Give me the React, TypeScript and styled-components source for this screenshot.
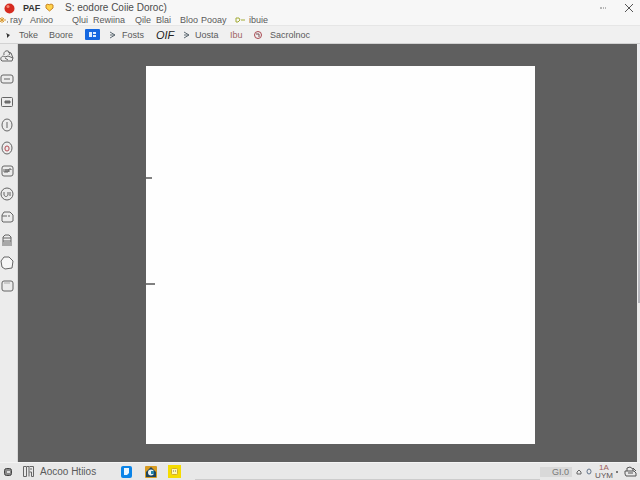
import React from "react";
import styled, { createGlobalStyle } from "styled-components";

const Global = createGlobalStyle`
  * { box-sizing: border-box; }
  body { margin: 0; font-family: "Liberation Sans", Arial, sans-serif; color: #4c4c4c; background: #e8e8e8; }
  button { font: inherit; color: inherit; background: none; border: 0; padding: 0; margin: 0; }
  svg { display: block; flex: none; }
`;

const Window = styled.div`
  min-height: 100vh;
  display: grid;
  grid-template-rows: 15px 11px 18px 1fr 18px;
`;
const TitleBar = styled.header`
  display: flex;
  align-items: center;
  gap: 4px;
  padding: 0 6px 0 4px;
  background: #f7f7f7;
`;
const AppName = styled.span`
  width: 18px;
  margin-left: 4px;
  font: bold 9px "Liberation Sans", sans-serif;
  color: #333;
`;
const Title = styled.h1`
  flex: 1;
  margin: 0 0 0 7px;
  font-size: 10px;
  line-height: 12px;
  font-weight: 400;
  white-space: nowrap;
`;
const WindowButton = styled.button`
  display: grid;
  place-items: center;
  width: 10px;
  height: 12px;
  margin-left: 12px;
`;
const MenuBar = styled.nav`
  display: flex;
  align-items: center;
  background: #f7f7f7;
  border-bottom: 1px solid #e6e6e6;
`;
const ToolBar = styled.div`
  display: flex;
  align-items: center;
  background: #f0f0f0;
  border-bottom: 1px solid #d2d2d2;
`;
const BarItem = styled.button<{ $w: number; $color?: string; $size?: number; $slant?: boolean }>`
  display: flex;
  align-items: center;
  flex: none;
  width: ${(p) => p.$w}px;
  height: 100%;
  font-size: ${(p) => p.$size ?? 9}px;
  line-height: 10px;
  font-style: ${(p) => (p.$slant ? "italic" : "normal")};
  color: ${(p) => p.$color ?? "#5a5a5a"};
  white-space: nowrap;
`;
const Body = styled.div`
  display: grid;
  grid-template-columns: 18px 1fr 3px;
`;
const SideBar = styled.aside`
  display: flex;
  flex-direction: column;
  background: #ececec;
  border-right: 1px solid #d8d8d8;
`;
const Tool = styled.button`
  display: grid;
  place-items: center;
  width: 14px;
  height: 23px;
`;
const Workspace = styled.main`
  display: flex;
  padding: 22px 16.5% 18px 20.7%;
  background: #5f5f5f;
`;
const Page = styled.section`
  flex: 1;
  display: flex;
  flex-direction: column;
  background: #fefefe;
  padding-top: 111px;
  gap: 104px;
`;
const Tick = styled.span<{ $w: number }>`
  width: ${(p) => p.$w}px;
  height: 2px;
  background: #808080;
`;
const ScrollTrack = styled.div`
  display: flex;
  flex-direction: column;
  background: #ebebeb;
`;
const ScrollThumb = styled.div`
  height: 62%;
  background: linear-gradient(#ececef 20%, #b4b4ba);
  border-left: 1px solid #eeeeee;
`;
const StatusBar = styled.footer`
  display: flex;
  align-items: center;
  background: #e8e8e8;
  border-top: 1px solid #f4f4f4;
`;
const StatusTrack = styled.div`
  flex: 1;
  align-self: flex-end;
  height: 1px;
  background: #cccccc;
`;
const Reading = styled.span`
  width: 32px;
  margin-right: 4px;
  padding-right: 3px;
  text-align: right;
  background: #d9d9d9;
  font-size: 9px;
  line-height: 10px;
  color: #777;
`;
const Clock = styled.span`
  width: 20px;
  font-size: 8px;
  line-height: 8px;
  text-align: center;
  color: #5c5252;
`;
const ClockTop = styled.span`
  color: #a0605c;
`;

const toolDrawings: [string, React.ReactNode][] = [
  ["Shapes", <><path d="M4 6C3 2 8 0 10 4L9 6M1 11C0 8 3 6 5 8L8 7 13 9 12 12H2Z" /><path d="M8 3l3 1 2 5M5 9l3 2" /></>],
  ["Line", <><rect x="1" y="3" width="12" height="8" rx="2" /><path d="M4 7h6" /></>],
  ["Frame", <><rect x="1.5" y="2.5" width="11" height="9" rx="1" /><path d="M5 6h5v2H5z" fill="#777" /></>],
  ["Info", <><ellipse cx="7" cy="7" rx="5" ry="6" /><path d="M7 4v6" /></>],
  ["Record", <><ellipse cx="7" cy="7" rx="5" ry="6" /><rect x="5" y="5" width="4" height="5" rx="2" stroke="#b44a52" /></>],
  ["Text", <><rect x="2" y="2" width="11" height="10" rx="2" /><path d="M4 5v3h2V5v3h2V5v3M9 8V5h2v1" /></>],
  ["Smile", <><circle cx="7" cy="7" r="6" /><path d="M4 5v3c1 2 3 2 4 0V5M10 5v4" /></>],
  ["Note", <><path d="M2 5l2-3h6l3 3v6l-2 1H3l-1-1z" /><path d="M2 6h5M8 6h2" /></>],
  ["Archive", <><path d="M3 11V4l2-2h4l2 2v7M2 12h10M3 5h8M3 8h8M4 10h6" /></>],
  ["Shape", <path d="M4 1L1 5l1 6 3 2 7-1 1-7-4-4z" fill="#f6f6f6" />],
  ["Panel", <><rect x="2" y="2" width="11" height="10" rx="2" /><path d="M4 4h6" stroke="#aaa" /></>],
];

const Arrow = () => (
  <svg width="8" height="8" viewBox="0 0 8 8" fill="none" stroke="#5e6a73"><path d="M1 1l5 3-5 3M1 4h5" /></svg>
);

export default function App() {
  return (
    <Window>
      <Global />
      <TitleBar>
        <svg width="11" height="12" viewBox="0 0 11 12"><circle cx="5.5" cy="6.5" r="5" fill="#d62b20" /><circle cx="4" cy="4.5" r="1.5" fill="#f28a78" /></svg>
        <AppName>PAF</AppName>
        <svg width="9" height="9" viewBox="0 0 9 9"><path d="M1 2l2-1 1 1 2-1 2 1v3L4.500 8 1 5z" fill="#ffd34c" stroke="#c98524" /></svg>
        <Title>S: eodore Coiie Doroc)</Title>
        <WindowButton aria-label="More"><svg width="8" height="4" viewBox="0 0 8 4"><path d="M1 2h2M4 2h1M6 2h1" stroke="#777" /></svg></WindowButton>
        <WindowButton aria-label="Close"><svg width="8" height="8" viewBox="0 0 8 8"><path d="M0 0l8 8M8 0L0 8" stroke="#555" /></svg></WindowButton>
      </TitleBar>
      <MenuBar>
        <BarItem $w={10} aria-label="Favourite"><svg width="9" height="9" viewBox="0 0 9 9"><path d="M0 4h6M2 1v6M0 2l4 4M4 2L0 6" stroke="#d99a32" /><path d="M7 6h1" stroke="#555" /></svg></BarItem>
        <BarItem $w={20}>ray</BarItem>
        <BarItem $w={42}>Anioo</BarItem>
        <BarItem $w={21}>Qlui</BarItem>
        <BarItem $w={42}>Rewiina</BarItem>
        <BarItem $w={21}>Qile</BarItem>
        <BarItem $w={24}>Blai</BarItem>
        <BarItem $w={21}>Bloo</BarItem>
        <BarItem $w={34}>Pooay</BarItem>
        <BarItem $w={14} aria-label="Key"><svg width="11" height="8" viewBox="0 0 11 8" fill="none" stroke="#a2ab35"><path d="M1 6V2h3l1 2-2 2zM6 4h4" /></svg></BarItem>
        <BarItem $w={20}>ibuie</BarItem>
      </MenuBar>
      <ToolBar>
        <BarItem $w={19} aria-label="Pointer"><svg width="12" height="8" viewBox="0 0 12 8"><path d="M6 2l4 2-3 3V4z" fill="#333" /></svg></BarItem>
        <BarItem $w={30}>Toke</BarItem>
        <BarItem $w={36}>Boore</BarItem>
        <BarItem $w={24} aria-label="Layout"><svg width="15" height="11" viewBox="0 0 15 11"><rect width="15" height="11" rx="1" fill="#1467e0" /><path d="M4 3h3v5H4zM8 3h3v2H8zM8 6h3v2H8z" fill="#dcecff" /></svg></BarItem>
        <BarItem $w={13} aria-label="Next"><Arrow /></BarItem>
        <BarItem $w={34}>Fosts</BarItem>
        <BarItem $w={27} $size={11} $slant $color="#222">OIF</BarItem>
        <BarItem $w={12} aria-label="Forward"><Arrow /></BarItem>
        <BarItem $w={35}>Uosta</BarItem>
        <BarItem $w={23} $color="#a06464">Ibu</BarItem>
        <BarItem $w={17} aria-label="Alert"><svg width="10" height="10" viewBox="0 0 10 10" fill="none" stroke="#a94850"><circle cx="5" cy="5" r="3.500" /><path d="M3 4h3v3" stroke="#764a50" /></svg></BarItem>
        <BarItem $w={46}>Sacrolnoc</BarItem>
      </ToolBar>
      <Body>
        <SideBar>
          {toolDrawings.map(([name, drawing]) => (
            <Tool key={name} aria-label={name}>
              <svg width="14" height="14" viewBox="0 0 14 14" fill="none" stroke="#656565">{drawing}</svg>
            </Tool>
          ))}
        </SideBar>
        <Workspace>
          <Page><Tick $w={6} /><Tick $w={9} /></Page>
        </Workspace>
        <ScrollTrack><ScrollThumb /></ScrollTrack>
      </Body>
      <StatusBar>
        <BarItem $w={23} aria-label="Stop"><svg width="12" height="10" viewBox="0 0 12 10"><rect x="4.500" y="1.500" width="7" height="7" rx="2" fill="#888" stroke="#444" /><path d="M7 4h3v2H7z" fill="#ddd" /></svg></BarItem>
        <BarItem $w={17} aria-label="Library"><svg width="11" height="11" viewBox="0 0 11 11" fill="none" stroke="#666"><path d="M.5.5h3v10h-3zM4 .5h2v10M6.500.5h4v10h-2V6h-2M8 2v2" /></svg></BarItem>
        <BarItem $w={81} $size={10}>Aocoo Htiios</BarItem>
        <BarItem $w={24} aria-label="Document"><svg width="11" height="12" viewBox="0 0 11 12"><rect width="11" height="12" rx="2" fill="#0a84e8" /><path d="M3 2h5v5L6 9H3z" fill="#e9f6ff" /></svg></BarItem>
        <BarItem $w={23} aria-label="Home"><svg width="12" height="12" viewBox="0 0 12 12"><rect width="12" height="12" rx="1" fill="#d79a20" /><path d="M1 6l5-5 5 5v5H1z" fill="#20445c" /><circle cx="6" cy="6.500" r="3" fill="#e9f2f5" /><path d="M6 5h3v3H6z" fill="#2584ad" /></svg></BarItem>
        <BarItem $w={27} aria-label="Notes"><svg width="13" height="13" viewBox="0 0 13 13"><rect width="13" height="13" fill="#f5dc00" /><rect x="3.500" y="3.500" width="6" height="6" rx="1" fill="#fff8b2" stroke="#d0ad28" /><path d="M5 6h1M7 6h1" stroke="#666" /></svg></BarItem>
        <StatusTrack />
        <Reading>GI.0</Reading>
        <BarItem $w={10} aria-label="Up"><svg width="7" height="6" viewBox="0 0 7 6" fill="none" stroke="#666"><path d="M1 3l2-2 2 2v2H1z" /></svg></BarItem>
        <BarItem $w={8} aria-label="Status"><svg width="6" height="7" viewBox="0 0 6 7" fill="none" stroke="#62758c"><ellipse cx="3" cy="3.500" rx="2" ry="2.500" /></svg></BarItem>
        <Clock><ClockTop>1A</ClockTop><br />UYM</Clock>
        <BarItem $w={10} aria-label="More status"><svg width="7" height="4" viewBox="0 0 7 4"><circle cx="3" cy="2" r="1" fill="#555" /></svg></BarItem>
        <BarItem $w={16} aria-label="Printer"><svg width="13" height="11" viewBox="0 0 13 11" fill="none" stroke="#555"><path d="M3 5V2l3-1 3 2v2M1 5h9l2 2v3H2L1 8zM4 7h5M9 2l3 3" /></svg></BarItem>
      </StatusBar>
    </Window>
  );
}
